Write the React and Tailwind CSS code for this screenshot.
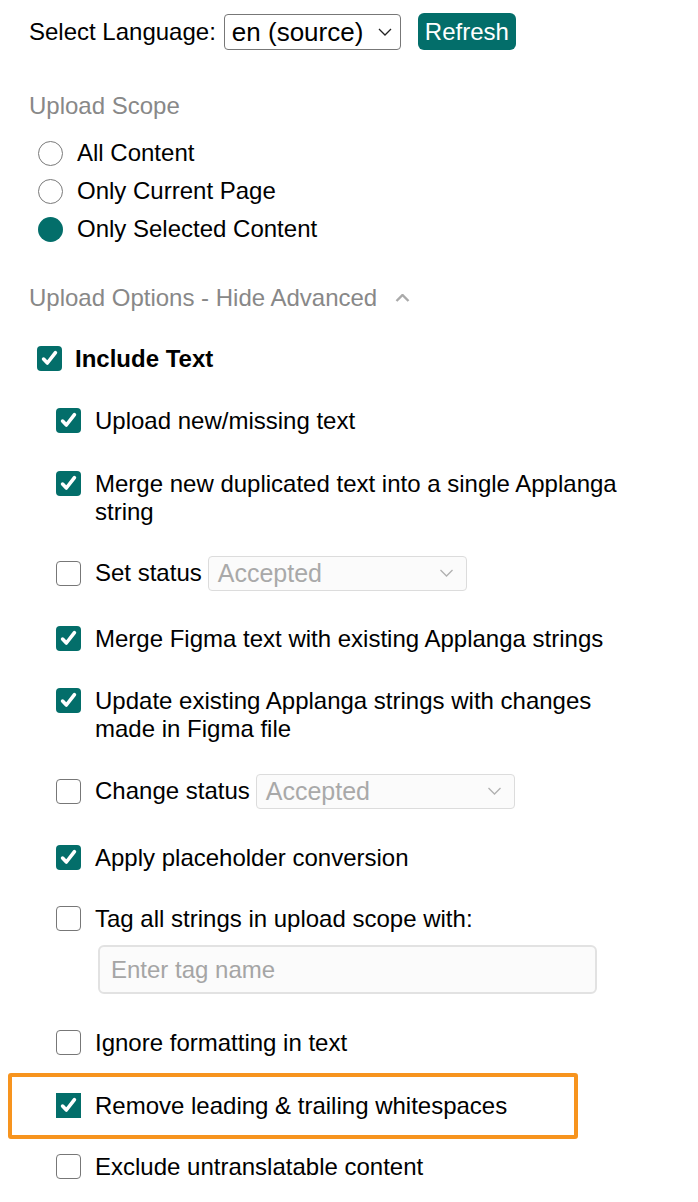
import { useState } from 'react';

const TEAL = 'bg-[#036e6a]';

function Chevron({ className = '' }) {
  return (
    <svg viewBox="0 0 14 8" className={className} fill="none" stroke="currentColor" strokeWidth="1.3">
      <path d="M1 1l6 6 6-6" />
    </svg>
  );
}

function Checkbox({ checked, square = false }) {
  return (
    <span
      className={`mt-[1px] flex h-[25px] w-[25px] shrink-0 items-center justify-center ${
        square ? '' : 'rounded-[4px]'
      } ${checked ? TEAL : 'border-[1.5px] border-[#777] bg-white'}`}
    >
      {checked ? (
        <svg viewBox="0 0 16 16" className="h-[19px] w-[19px]" fill="none" stroke="white" strokeWidth="3" strokeLinecap="round" strokeLinejoin="round">
          <path d="M3 8.5l3.2 3.3L13 3" />
        </svg>
      ) : null}
    </span>
  );
}

function Radio({ checked, label }) {
  return (
    <div className="flex h-[28px] items-center">
      <span
        className={`ml-[9px] h-[25px] w-[25px] shrink-0 rounded-full ${
          checked ? TEAL : 'border-[1.5px] border-[#7a7a7a] bg-white'
        }`}
      />
      <span className="ml-[14px]">{label}</span>
    </div>
  );
}

function StatusSelect({ width }) {
  return (
    <div
      className={`ml-[6px] flex h-[35px] items-center justify-between rounded-[4px] border border-[#dcdcdc] bg-[#fbfbfb] pl-[9px] pr-[12px] text-[25px] text-[#a9a9a9] ${width}`}
    >
      <span>Accepted</span>
      <Chevron className="h-[8px] w-[15px] text-[#b0b0b0]" />
    </div>
  );
}

function Option({ checked, children, className = '', square }) {
  return (
    <div className={`flex items-start pl-[27px] ${className}`}>
      <Checkbox checked={checked} square={square} />
      <div className="ml-[14px]">{children}</div>
    </div>
  );
}

export default function App() {
  const [lang] = useState('en (source)');

  return (
    <div className="min-h-[1202px] bg-white pl-[29px] pt-[13px] text-[24px] leading-[28px] text-black [font-family:'Liberation_Sans',Arial,sans-serif]">
      <div className="flex h-[37px] items-center">
        <span>Select Language:</span>
        <div className="ml-[8px] flex h-[36px] w-[177px] items-center justify-between rounded-[4px] border border-[#777] pl-[7px] pr-[8px] text-[26px]">
          <span>{lang}</span>
          <Chevron className="h-[8px] w-[14px] text-[#222]" />
        </div>
        <button className={`ml-[17px] h-[37px] rounded-[6px] ${TEAL} px-[7px] text-white`}>Refresh</button>
      </div>

      <div className="mt-[42px] text-[#888]">Upload Scope</div>

      <div className="mt-[19px] flex flex-col gap-[10px]">
        <Radio label="All Content" />
        <Radio label="Only Current Page" />
        <Radio checked label="Only Selected Content" />
      </div>

      <div className="mt-[41px] flex items-center text-[#888]">
        <span>Upload Options - Hide Advanced</span>
        <svg viewBox="0 0 14 8" className="ml-[18px] h-[8px] w-[15px]" fill="none" stroke="#aaa" strokeWidth="2.4">
          <path d="M1 7l6-6 6 6" />
        </svg>
      </div>

      <div className="mt-[33px] flex items-start pl-[8px]">
        <Checkbox checked />
        <span className="ml-[13px] font-bold">Include Text</span>
      </div>

      <Option checked className="mt-[34px]">Upload new/missing text</Option>

      <Option checked className="mt-[35px]">
        Merge new duplicated text into a single Applanga
        <br />
        string
      </Option>

      <div className="mt-[29px] flex h-[36px] items-center pl-[27px]">
        <Checkbox />
        <span className="ml-[14px]">Set status</span>
        <StatusSelect width="w-[259px]" />
      </div>

      <Option checked className="mt-[34px]">Merge Figma text with existing Applanga strings</Option>

      <Option checked className="mt-[34px]">
        Update existing Applanga strings with changes
        <br />
        made in Figma file
      </Option>

      <div className="mt-[30px] flex h-[36px] items-center pl-[27px]">
        <Checkbox />
        <span className="ml-[14px]">Change status</span>
        <StatusSelect width="w-[259px]" />
      </div>

      <Option checked className="mt-[35px]">Apply placeholder conversion</Option>

      <Option className="mt-[33px]">
        Tag all strings in upload scope with:
        <input
          placeholder="Enter tag name"
          className="mt-[12px] ml-[3px] block h-[49px] w-[499px] rounded-[6px] border-2 border-[#e2e2e2] bg-[#fbfbfb] pl-[11px] outline-none placeholder:text-[#a5a5a5]"
        />
      </Option>

      <Option className="mt-[35px]">Ignore formatting in text</Option>

      <div className="ml-[-21px] mt-[16px] flex h-[66px] w-[570px] items-center rounded-[3px] border-4 border-[#f7941e]">
        <div className="flex items-start pl-[44px]">
          <Checkbox checked square />
          <span className="ml-[14px]">Remove leading &amp; trailing whitespaces</span>
        </div>
      </div>

      <Option className="mt-[14px]">Exclude untranslatable content</Option>
    </div>
  );
}
